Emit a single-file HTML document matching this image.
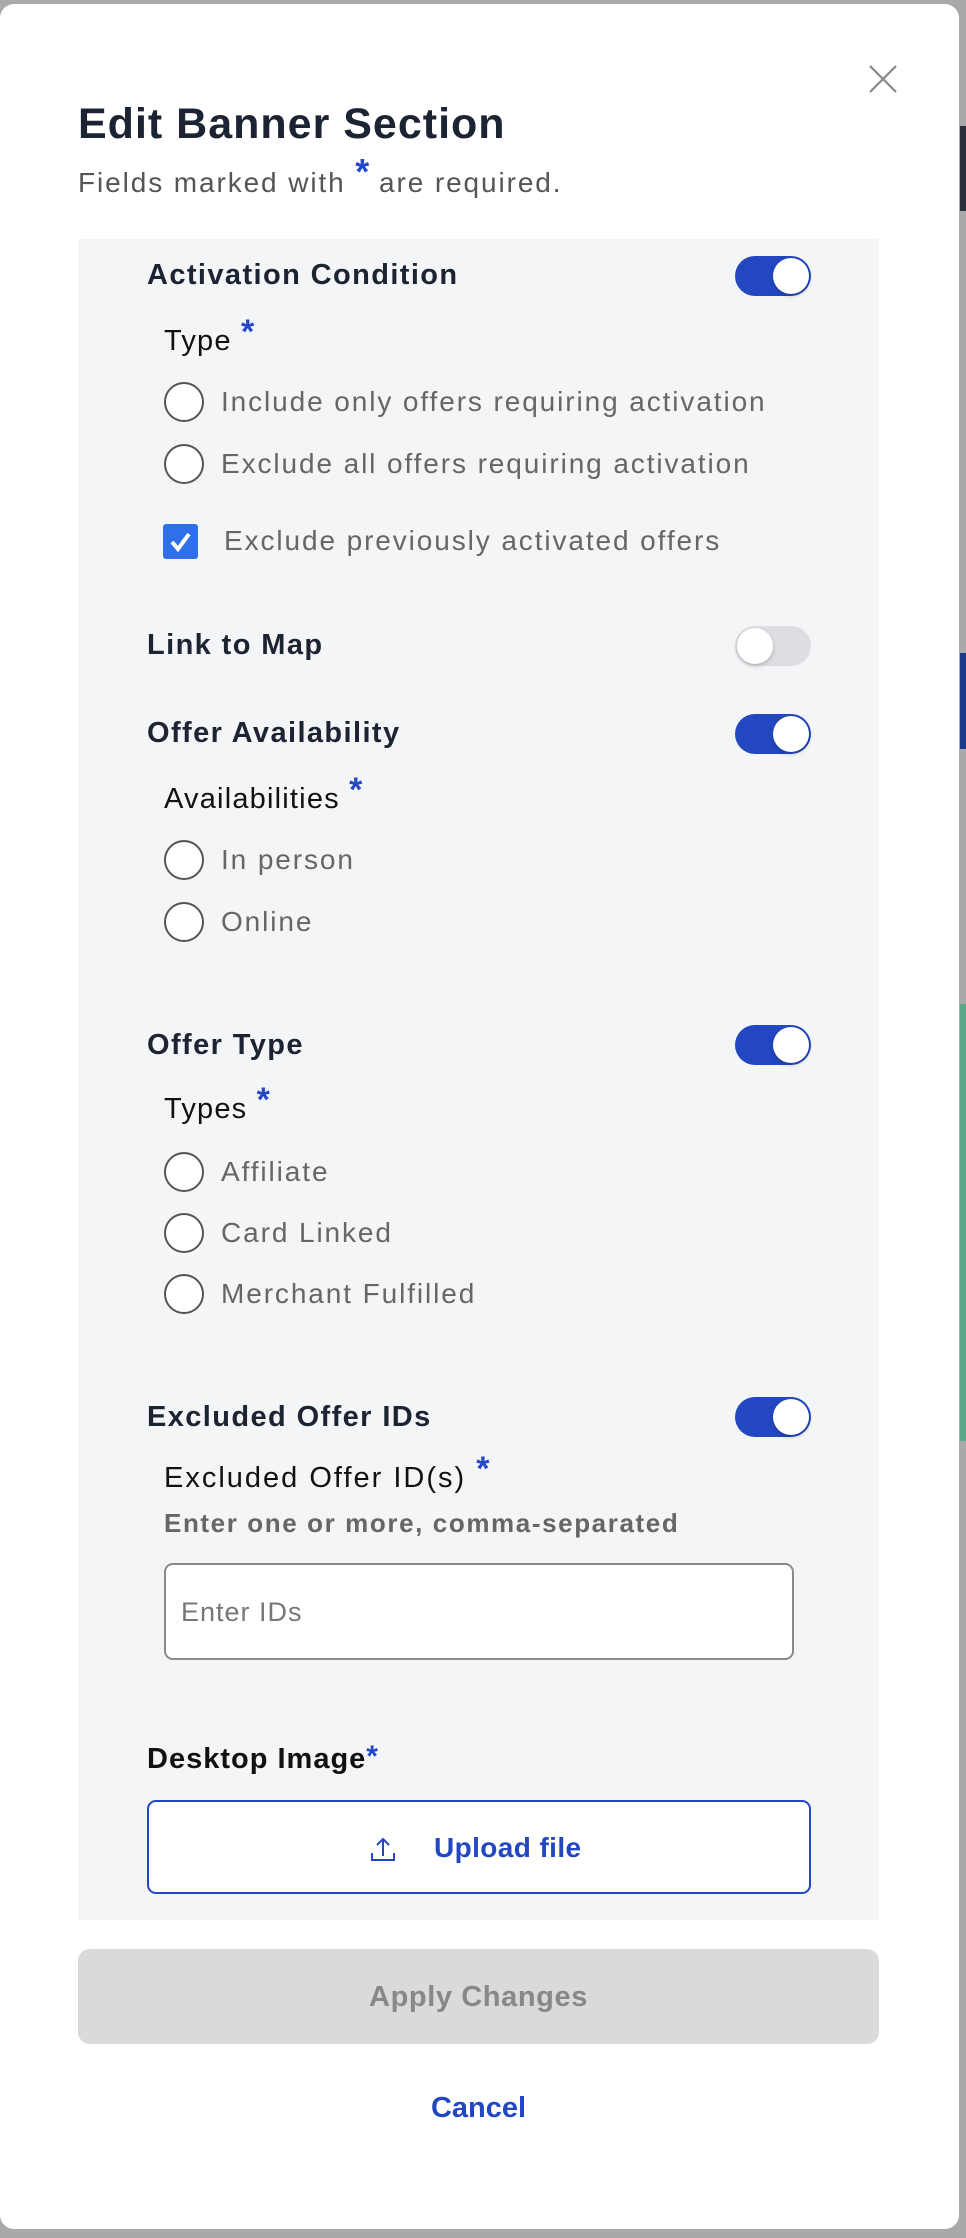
<!DOCTYPE html>
<html><head><meta charset="utf-8"><style>
*{box-sizing:border-box;margin:0;padding:0}
body{width:966px;height:2238px;background:#a9a9a9;position:relative;overflow:hidden;font-family:"Liberation Sans",sans-serif}
.a{position:absolute;white-space:nowrap}
.modal{position:absolute;left:0;top:4px;width:959px;height:2225px;background:#fff;border-radius:14px}
.panel{position:absolute;left:78px;top:235px;width:801px;height:1681px;background:#f4f5f7}
.h{font-weight:bold;font-size:29px;color:#1c2433;left:147px;letter-spacing:1.4px}
.lab{font-size:29px;color:#111;left:164px;letter-spacing:1.2px;line-height:34px}
.st{color:#2347c5;font-weight:bold;font-size:34px;position:relative;top:-7px;letter-spacing:0;line-height:0}
.r{left:164px;width:40px;height:40px;border:2px solid #555;border-radius:50%;background:#fff}
.rt{left:221px;font-size:28px;color:#666;letter-spacing:1.9px}
.tg{left:735px;width:76px;height:40px;border-radius:20px;background:#2247c0}
.tg::after{content:"";position:absolute;right:2px;top:2px;width:36px;height:36px;border-radius:50%;background:#fff;box-shadow:0 2px 5px rgba(0,0,0,.2)}
.tg.off{background:#dcdee2}
.tg.off::after{right:auto;left:2px}
</style></head><body>
<div class="a" style="left:960px;top:126px;width:6px;height:85px;background:#2a2f3a"></div>
<div class="a" style="left:960px;top:653px;width:6px;height:96px;background:#1c3a8a"></div>
<div class="a" style="left:960px;top:1004px;width:6px;height:437px;background:#5aa888"></div>
<div class="modal">
<svg class="a" style="left:868px;top:60px" width="30" height="30" viewBox="0 0 30 30"><path d="M2 2L28 28M28 2L2 28" stroke="#888" stroke-width="2.2" fill="none"/></svg>
<div class="a" style="left:78px;top:96px;font-size:43px;font-weight:bold;color:#1c2433;letter-spacing:1px">Edit Banner Section</div>
<div class="a" style="left:78px;top:162px;font-size:28px;color:#555;letter-spacing:1.9px;line-height:34px">Fields marked with <span class="st" style="font-size:36px;top:-8px">*</span> are required.</div>
<div class="panel"></div>
</div>
<div class="a h" style="top:259px">Activation Condition</div>
<div class="a tg" style="top:256px"></div>
<div class="a lab" style="top:324px">Type <span class="st">*</span></div>
<div class="a r" style="top:382px"></div><div class="a rt" style="top:386px">Include only offers requiring activation</div>
<div class="a r" style="top:444px"></div><div class="a rt" style="top:448px">Exclude all offers requiring activation</div>
<div class="a" style="left:163px;top:524px;width:35px;height:35px;background:#2f6fe8;border-radius:3px"><svg width="35" height="35" viewBox="0 0 35 35"><path d="M9 18l6 7 11-15" stroke="#fff" stroke-width="4" fill="none"/></svg></div>
<div class="a rt" style="left:224px;top:525px">Exclude previously activated offers</div>
<div class="a h" style="top:629px">Link to Map</div>
<div class="a tg off" style="top:626px"></div>
<div class="a h" style="top:717px">Offer Availability</div>
<div class="a tg" style="top:714px"></div>
<div class="a lab" style="top:782px">Availabilities <span class="st">*</span></div>
<div class="a r" style="top:840px"></div><div class="a rt" style="top:844px">In person</div>
<div class="a r" style="top:902px"></div><div class="a rt" style="top:906px">Online</div>
<div class="a h" style="top:1029px">Offer Type</div>
<div class="a tg" style="top:1025px"></div>
<div class="a lab" style="top:1092px">Types <span class="st">*</span></div>
<div class="a r" style="top:1152px"></div><div class="a rt" style="top:1156px">Affiliate</div>
<div class="a r" style="top:1213px"></div><div class="a rt" style="top:1217px">Card Linked</div>
<div class="a r" style="top:1274px"></div><div class="a rt" style="top:1278px">Merchant Fulfilled</div>
<div class="a h" style="top:1401px">Excluded Offer IDs</div>
<div class="a tg" style="top:1397px"></div>
<div class="a lab" style="top:1461px;letter-spacing:2px">Excluded Offer ID(s) <span class="st">*</span></div>
<div class="a" style="left:164px;top:1508px;font-size:26px;font-weight:bold;color:#666;letter-spacing:1.6px">Enter one or more, comma-separated</div>
<div class="a" style="left:164px;top:1563px;width:630px;height:97px;background:#fff;border:2px solid #8a8a8a;border-radius:9px"></div>
<div class="a" style="left:181px;top:1597px;font-size:27px;color:#777;letter-spacing:1px">Enter IDs</div>
<div class="a" style="left:147px;top:1742px;font-size:29px;font-weight:bold;color:#111;letter-spacing:1px;line-height:34px">Desktop Image<span class="st" style="font-size:30px;top:-2px">*</span></div>
<div class="a" style="left:147px;top:1800px;width:664px;height:94px;background:#fff;border:2px solid #2247c0;border-radius:9px"></div>
<svg class="a" style="left:369px;top:1836px" width="28" height="28" viewBox="0 0 28 28"><path d="M14 20V3M8 9l6-6 6 6M3 17v7h22v-7" stroke="#2247c0" stroke-width="2" fill="none"/></svg>
<div class="a" style="left:434px;top:1832px;font-size:28px;font-weight:bold;color:#2247c0;letter-spacing:0.4px">Upload file</div>
<div class="a" style="left:78px;top:1949px;width:801px;height:95px;background:#dadada;border-radius:12px"></div>
<div class="a" style="left:78px;width:801px;top:1981px;text-align:center;font-size:29px;font-weight:bold;color:#888;letter-spacing:0.6px">Apply Changes</div>
<div class="a" style="left:78px;width:801px;top:2092px;text-align:center;font-size:29px;font-weight:bold;color:#2247c0">Cancel</div>
</body></html>
